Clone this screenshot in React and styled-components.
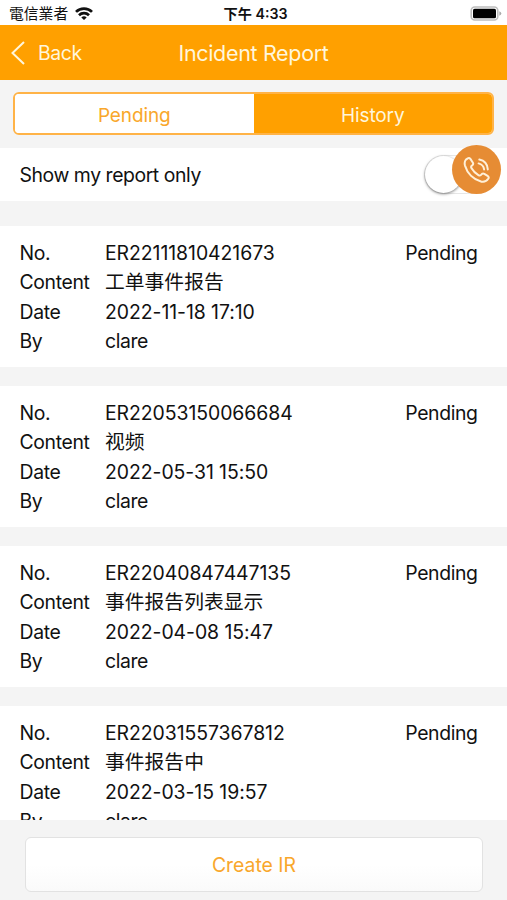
import React, { useState } from "react";
import styled, { createGlobalStyle } from "styled-components";

const GlobalStyle = createGlobalStyle`
  * {
    box-sizing: border-box;
  }
  body {
    margin: 0;
    background-color: #f4f4f4;
    overflow: hidden;
  }
  button {
    font: inherit;
    letter-spacing: inherit;
    padding: 0;
    cursor: pointer;
  }
`;

const Screen = styled.div`
  height: 100vh;
  display: flex;
  flex-direction: column;
  position: relative;
  background-color: #f4f4f4;
  color: #111;
  font-family: Inter, "Noto Sans CJK SC", sans-serif;
  font-size: 19.4px;
  overflow: hidden;
`;

// Status bar
const StatusBar = styled.div`
  flex: none;
  height: 25px;
  padding: 2px 5px 0 9px;
  display: grid;
  grid-template-columns: 1fr auto 1fr;
  align-items: center;
  background-color: #fff;
  font-family: Inter, "Noto Sans CJK TC", sans-serif;
  font-size: 14.8px;
  line-height: 20px;
`;
const Carrier = styled.div`
  display: flex;
  align-items: center;
  gap: 7px;
  font-weight: 400;
`;
const Clock = styled.div`
  font-size: 14.2px;
  font-weight: 600;
`;
const BatteryIcon = styled.svg`
  justify-self: end;
`;

// Header
const Header = styled.header`
  flex: none;
  height: 55px;
  display: grid;
  grid-template-columns: 1fr auto 1fr;
  align-items: center;
  background-color: #ffa000;
  color: #fff6dc;
`;
const BackButton = styled.button`
  justify-self: start;
  display: flex;
  align-items: center;
  gap: 13px;
  margin-left: 11px;
  border: none;
  background: none;
  color: inherit;
  letter-spacing: -0.4px;
`;
const Title = styled.h1`
  margin: 0;
  font-size: 21.5px;
  font-weight: 400;
  letter-spacing: -0.33px;
`;

// Tabs
const Tabs = styled.div`
  flex: none;
  height: 43px;
  margin: 12px 13px 13px;
  display: flex;
  border: 2px solid #ffb347;
  border-radius: 6px;
  background-color: #fff;
  overflow: hidden;
`;
const Tab = styled.button`
  flex: 1;
  padding-top: 3px;
  border: none;
  background-color: ${(props) => (props.$active ? "#ffa000" : "#fff")};
  color: ${(props) => (props.$active ? "#fff6dc" : "#f9a72b")};
  font-size: 19px;
  letter-spacing: -0.1px;
`;

// Filter
const FilterRow = styled.label`
  flex: none;
  height: 53px;
  margin-bottom: 25px;
  padding: 0 20px 0 19.5px;
  display: flex;
  align-items: center;
  justify-content: space-between;
  background-color: #fff;
  letter-spacing: -0.43px;
`;
const Switch = styled.span`
  width: 63px;
  height: 39px;
  display: flex;
  border: 1px solid #e6e6e6;
  border-radius: 20px;
  background-color: #fff;
`;
const Knob = styled.span`
  width: 37px;
  height: 37px;
  border-radius: 50%;
  background-color: #fff;
  box-shadow: 0 1px 3px rgb(0 0 0 / 50%);
`;

// Reports
const ReportList = styled.div`
  flex: 1;
  min-height: 0;
  display: flex;
  flex-direction: column;
  gap: 19px;
  overflow: hidden;
`;
const Report = styled.div`
  flex: none;
  height: 141px;
  padding: 13px 29.5px 0 19.5px;
  display: grid;
  grid-template-columns: 85.5px 1fr auto;
  grid-auto-rows: 29.35px;
  align-content: start;
  line-height: 29.35px;
  background-color: #fff;
  white-space: nowrap;
`;
const Label = styled.div`
  grid-column: 1;
  letter-spacing: -0.35px;
`;
const Value = styled.div`
  grid-column: 2;
  letter-spacing: -0.05px;
`;
const Content = styled(Value)`
  font-size: 19.8px;
  letter-spacing: 0;
`;
const Author = styled(Value)`
  letter-spacing: -0.4px;
`;
const Status = styled.div`
  grid-column: 3;
  letter-spacing: -0.4px;
`;

// Footer
const Footer = styled.footer`
  flex: none;
  height: 80px;
  padding: 17px 24px 8px 25px;
  display: flex;
`;
const CreateButton = styled.button`
  flex: 1;
  border: 1px solid #e2e2e2;
  border-radius: 6px;
  background: linear-gradient(#fff 50%, #fafafa);
  color: #f9a72b;
  letter-spacing: 0;
`;

const CallButton = styled.button`
  position: absolute;
  top: 145px;
  right: 6px;
  width: 49px;
  height: 49px;
  display: flex;
  align-items: center;
  justify-content: center;
  border: none;
  border-radius: 50%;
  background-color: #e68c34;
`;

const reports = [
  { no: "ER22111810421673", content: "工单事件报告", date: "2022-11-18 17:10" },
  { no: "ER22053150066684", content: "视频", date: "2022-05-31 15:50" },
  { no: "ER22040847447135", content: "事件报告列表显示", date: "2022-04-08 15:47" },
  { no: "ER22031557367812", content: "事件报告中", date: "2022-03-15 19:57" },
];

export default function App() {
  const [tab, setTab] = useState("History");

  const renderReports = () => {
    return reports.map((item) => {
      return (
        <Report key={item.no}>
          <Label>No.</Label>
          <Value>{item.no}</Value>
          <Status>Pending</Status>
          <Label>Content</Label>
          <Content>{item.content}</Content>
          <Label>Date</Label>
          <Value>{item.date}</Value>
          <Label>By</Label>
          <Author>clare</Author>
        </Report>
      );
    });
  };

  return (
    <Screen>
      <GlobalStyle />
      <StatusBar>
        <Carrier>
          電信業者
          <svg width="18" height="13" viewBox="0 0 18 13" fill="none" stroke="#111" strokeWidth="2.7">
            <path d="M1 4.9a11.3 11.3 0 0 1 16 0" />
            <path d="M4 8.2a7.1 7.1 0 0 1 10 0" />
            <path d="M9 13 6.3 10.5a3.9 3.9 0 0 1 5.4 0z" fill="#111" stroke="none" />
          </svg>
        </Carrier>
        <Clock>下午 4:33</Clock>
        <BatteryIcon width="32" height="15" viewBox="0 0 32 15">
          <rect x="1.2" y="1" width="26.6" height="13" rx="3.5" fill="#fff" stroke="#bdbdbd" strokeWidth="1.6" />
          <rect x="3" y="2.7" width="23" height="9.6" rx="1.6" fill="#000" />
          <path d="M29.3 5.2q2 1 2 2.3t-2 2.3z" fill="#aaa" />
        </BatteryIcon>
      </StatusBar>

      <Header>
        <BackButton>
          <svg width="14" height="24" viewBox="0 0 14 24" fill="none" stroke="currentColor" strokeWidth="2">
            <path d="M13 1 1.5 12 13 23" />
          </svg>
          Back
        </BackButton>
        <Title>Incident Report</Title>
      </Header>

      <Tabs>
        {["Pending", "History"].map((name) => (
          <Tab key={name} $active={tab === name} onClick={() => setTab(name)}>
            {name}
          </Tab>
        ))}
      </Tabs>

      <FilterRow>
        Show my report only
        <Switch>
          <Knob />
        </Switch>
      </FilterRow>

      <ReportList>{renderReports()}</ReportList>

      <Footer>
        <CreateButton>Create IR</CreateButton>
      </Footer>

      <CallButton aria-label="Call">
        <svg width="28" height="28" viewBox="0 0 28 28" fill="none" stroke="#fff0d8" strokeWidth="2" strokeLinecap="round" strokeLinejoin="round">
          <path d="M2.9 3.6 4.8 2.3Q6.3 1.6 7.4 2.9L9.9 6.7Q10.6 8 9.6 9L8.4 10.1Q7.8 10.9 8.4 12.1C10.3 15.5 12.4 17.5 15.7 19.4Q17 19.9 17.8 19.1L19 17.9Q20 17.1 21.3 17.8L25 20.2Q26.2 21.1 25.4 22.5Q22.8 26.6 18.5 25.7C10.5 23.5 4.2 17.2 2 9.6Q1 5.8 2.9 3.6Z" />
          <path d="M16.3 3.6Q24.2 5.2 24.8 13.4M15.6 7.4Q20.4 8.6 21.1 13.4" />
        </svg>
      </CallButton>
    </Screen>
  );
}
